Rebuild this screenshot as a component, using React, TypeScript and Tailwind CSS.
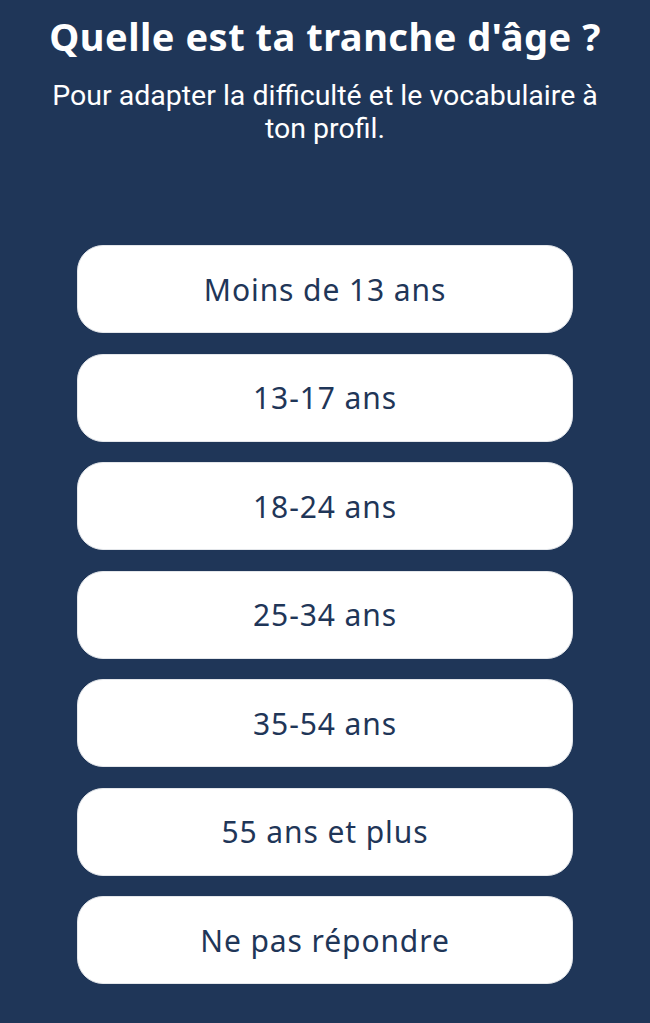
import React from "react";

const options = [
  "Moins de 13 ans",
  "13-17 ans",
  "18-24 ans",
  "25-34 ans",
  "35-54 ans",
  "55 ans et plus",
  "Ne pas répondre",
];

export default function App() {
  return (
    <div className="min-h-[1023px] w-full bg-[#1f3658] flex flex-col items-center font-['Noto_Sans',sans-serif]">
      <h1 className="mt-[10px] text-white text-[38px] leading-[52px] font-bold text-center tracking-[0.5px]">
        Quelle est ta tranche d'âge ?
      </h1>
      <p className="mt-[17px] text-white text-[28.5px] leading-[33px] text-center w-[580px] font-['Roboto',sans-serif]">
        Pour adapter la difficulté et le vocabulaire à ton profil.
      </p>
      <div className="mt-[100px] flex flex-col gap-[20.5px] w-[496px]">
        {options.map((o) => (
          <button
            key={o}
            className="h-[88px] w-full bg-white rounded-[26px] border border-[#e3e6ea] text-[#1f3658] text-[30px] tracking-[0.9px] flex items-center justify-center"
          >
            {o}
          </button>
        ))}
      </div>
    </div>
  );
}
